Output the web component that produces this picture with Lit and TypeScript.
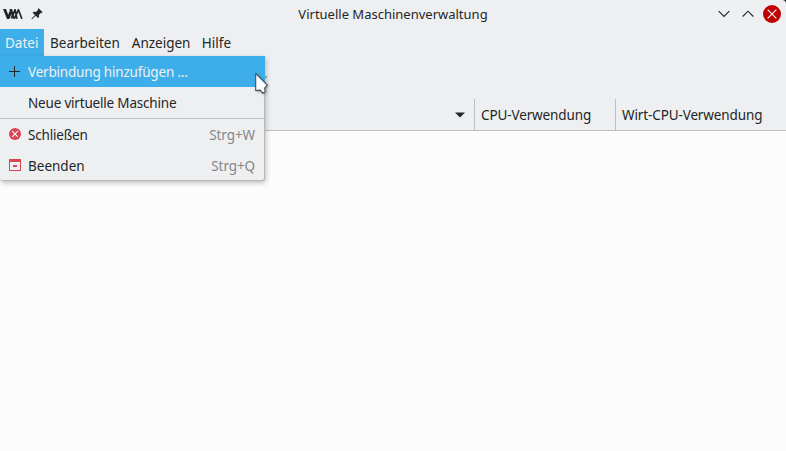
import { LitElement, html, css, nothing } from "lit";
import { customElement, property } from "lit/decorators.js";

const icons = {
  logo: html`<svg width="20" height="10" viewBox="0 0 20 10" fill="none" stroke="#232627" stroke-linejoin="miter">
    <path d="M0 0H3L5.2 5.8L7 1L8.6 4.6L6.4 10H4Z" fill="#232627" stroke="none"/>
    <path d="M8.4 9.4L12 .8L14 9.8M11.6 9.4L15.4 .8L18.9 9.8" stroke-width="1.7"/>
    <path d="M6.4 0H9L12.2 9.8H9.8Z" fill="#232627" stroke="none"/></svg>`,
  pin: html`<svg width="12" height="12" viewBox="0 0 12 12" fill="#232627">
    <path d="M7.6 .3L11.6 4.2L10.8 5L10 4.7L7.9 7L8 9.2L7.1 10.1L4.7 7.8L1 11.3L.4 10.8L4 7.1L1.6 4.7L2.5 3.8L4.8 4L7 1.9L6.8 1Z"/></svg>`,
  down: html`<svg width="12" height="8" viewBox="0 0 12 8" fill="none" stroke="#232627" stroke-width="1.15"><path d="M.7 1.2L6 6.5L11.3 1.2"/></svg>`,
  up: html`<svg width="12" height="8" viewBox="0 0 12 8" fill="none" stroke="#232627" stroke-width="1.15"><path d="M.7 6.5L6 1.2L11.3 6.5"/></svg>`,
  close: html`<svg width="18" height="18" viewBox="0 0 18 18"><circle cx="9" cy="9" r="9" fill="#bf0303"/><path d="M4.7 4.7L13.3 13.3M13.3 4.7L4.7 13.3" stroke="#fff" stroke-width="1.1"/></svg>`,
  plus: html`<svg width="12" height="12" viewBox="0 0 12 12"><path d="M0 6.5H11M5.5 1V12" stroke="#232627"/></svg>`,
  cancel: html`<svg width="12" height="12" viewBox="0 0 12 12"><circle cx="6" cy="6" r="6" fill="#da4453"/><path d="M3.2 3.2L8.8 8.8M8.8 3.2L3.2 8.8" stroke="#fff" stroke-width="1.05"/></svg>`,
  quit: html`<svg width="12" height="12" viewBox="0 0 12 12"><path d="M0 0H12V12H0ZM1 3V11H11V3ZM4 6H8V8H4Z" fill="#da4453" fill-rule="evenodd"/></svg>`,
};

@customElement("menu-entry")
class MenuEntry extends LitElement {
  @property() label = "";
  @property() shortcut = "";
  @property() icon = "";
  @property({ type: Boolean, reflect: true }) active = false;

  static styles = css`
    :host { display: flex; align-items: center; height: 31px; box-sizing: border-box; padding: 0 9px; color: #232627; white-space: nowrap; }
    :host([active]) { background: #3daee9; color: #eff0f1; margin-right: -1px; }
    .icon { width: 19px; display: flex; margin-top: -1px; }
    .label { flex: 1; }
    .shortcut { color: #84878a; letter-spacing: -.1px; }
  `;

  render() {
    return html`<span class="icon">${icons[this.icon as keyof typeof icons] ?? nothing}</span>
      <span class="label">${this.label}</span><span class="shortcut">${this.shortcut}</span>`;
  }
}

@customElement("app-root")
class AppRoot extends LitElement {
  static styles = css`
    :host { display: flex; flex-direction: column; position: relative; width: 786px; height: 451px; overflow: hidden; background: #eeeff1; color: #232627; font: 13.5px/18px "Noto Sans", sans-serif; white-space: nowrap; }
    svg { display: block; flex: none; }
    .title { height: 28px; padding-bottom: 1px; display: grid; grid-template-columns: 1fr auto 1fr; align-items: center; font-size: 13px; }
    .side { display: flex; align-items: center; gap: 8px; padding-left: 3px; }
    .buttons { display: flex; align-items: center; justify-content: flex-end; gap: 12px; padding-right: 5px; }
    .buttons svg:last-child { margin-left: -3px; }
    .menubar { height: 27px; display: flex; }
    .menubar span { padding: 0 6px; line-height: 28px; }
    .menubar .open { background: #3daee9; color: #eff0f1; padding: 0 5px; width: 34px; }
    .menubar span:last-child { margin-left: -.6px; }
    .toolbar { height: 43px; }
    .header { height: 31px; display: flex; border-bottom: 1px solid #bcbebf; letter-spacing: -.12px; }
    .col { display: flex; align-items: center; box-sizing: border-box; padding-left: 6px; border-left: 1px solid #bcbebf; }
    .name { width: 474px; border: 0; padding: 0 9px 0 0; justify-content: flex-end; }
    .cpu { width: 141px; }
    .host { flex: 1; }
    .list { flex: 1; background: #fcfcfc; }
    .menu { position: absolute; left: 0; top: 56px; width: 264px; height: 124px; background: #eeeff1; border: solid #b6b8ba; border-width: 0 1px 1px 0; border-radius: 0 0 3px 3px; box-shadow: 1px 2px 5px rgba(0, 0, 0, .24); }
    .rule { height: 1px; background: #bcbebf; }
    .tight { letter-spacing: -.19px; }
    .more { position: absolute; left: 258px; top: 76px; }
    .pointer { position: absolute; left: 254px; top: 72px; filter: drop-shadow(1px 1px 1px rgba(0, 0, 0, .3)); }
    .corner { position: absolute; right: 0; top: 0; }
  `;

  render() {
    return html`
      <div class="title">
        <div class="side">${icons.logo}${icons.pin}</div>
        <span>Virtuelle Maschinenverwaltung</span>
        <div class="buttons">${icons.down}${icons.up}${icons.close}</div>
      </div>
      <div class="menubar"><span class="open">Datei</span>${["Bearbeiten", "Anzeigen", "Hilfe"].map((t) => html`<span>${t}</span>`)}</div>
      <div class="toolbar"></div>
      <div class="header">
        <div class="col name"><svg width="10" height="6" viewBox="0 0 10 6"><path d="M0 .5H10L5 5.5Z" fill="#232627"/></svg></div>
        <div class="col cpu">CPU-Verwendung</div>
        <div class="col host">Wirt-CPU-Verwendung</div>
      </div>
      <div class="list"></div>
      <svg class="more" width="10" height="5" viewBox="0 0 10 5"><path d="M0 0H10L5 5Z" fill="#aeb0b2"/></svg>
      <div class="menu">
        <menu-entry class="tight" active icon="plus" label="Verbindung hinzufügen ..."></menu-entry>
        <menu-entry class="tight" label="Neue virtuelle Maschine"></menu-entry>
        <div class="rule"></div>
        <menu-entry class="tight" icon="cancel" label="Schließen" shortcut="Strg+W"></menu-entry>
        <menu-entry icon="quit" label="Beenden" shortcut="Strg+Q"></menu-entry>
      </div>
      <svg class="pointer" width="16" height="23" viewBox="0 0 16 23"><path d="M1.7 1.4V18.5L6.3 18.1L8.8 21.4L11.2 19.3L10.6 16.2L13.2 13.1Z" fill="#fcfcfc" stroke="#3f5362" stroke-width="1.1" stroke-linejoin="round"/></svg>
      <svg class="corner" width="3" height="3" viewBox="0 0 3 3"><path d="M0 0H3V3Q2.5 .6 0 0Z" fill="#232627"/></svg>
    `;
  }
}
